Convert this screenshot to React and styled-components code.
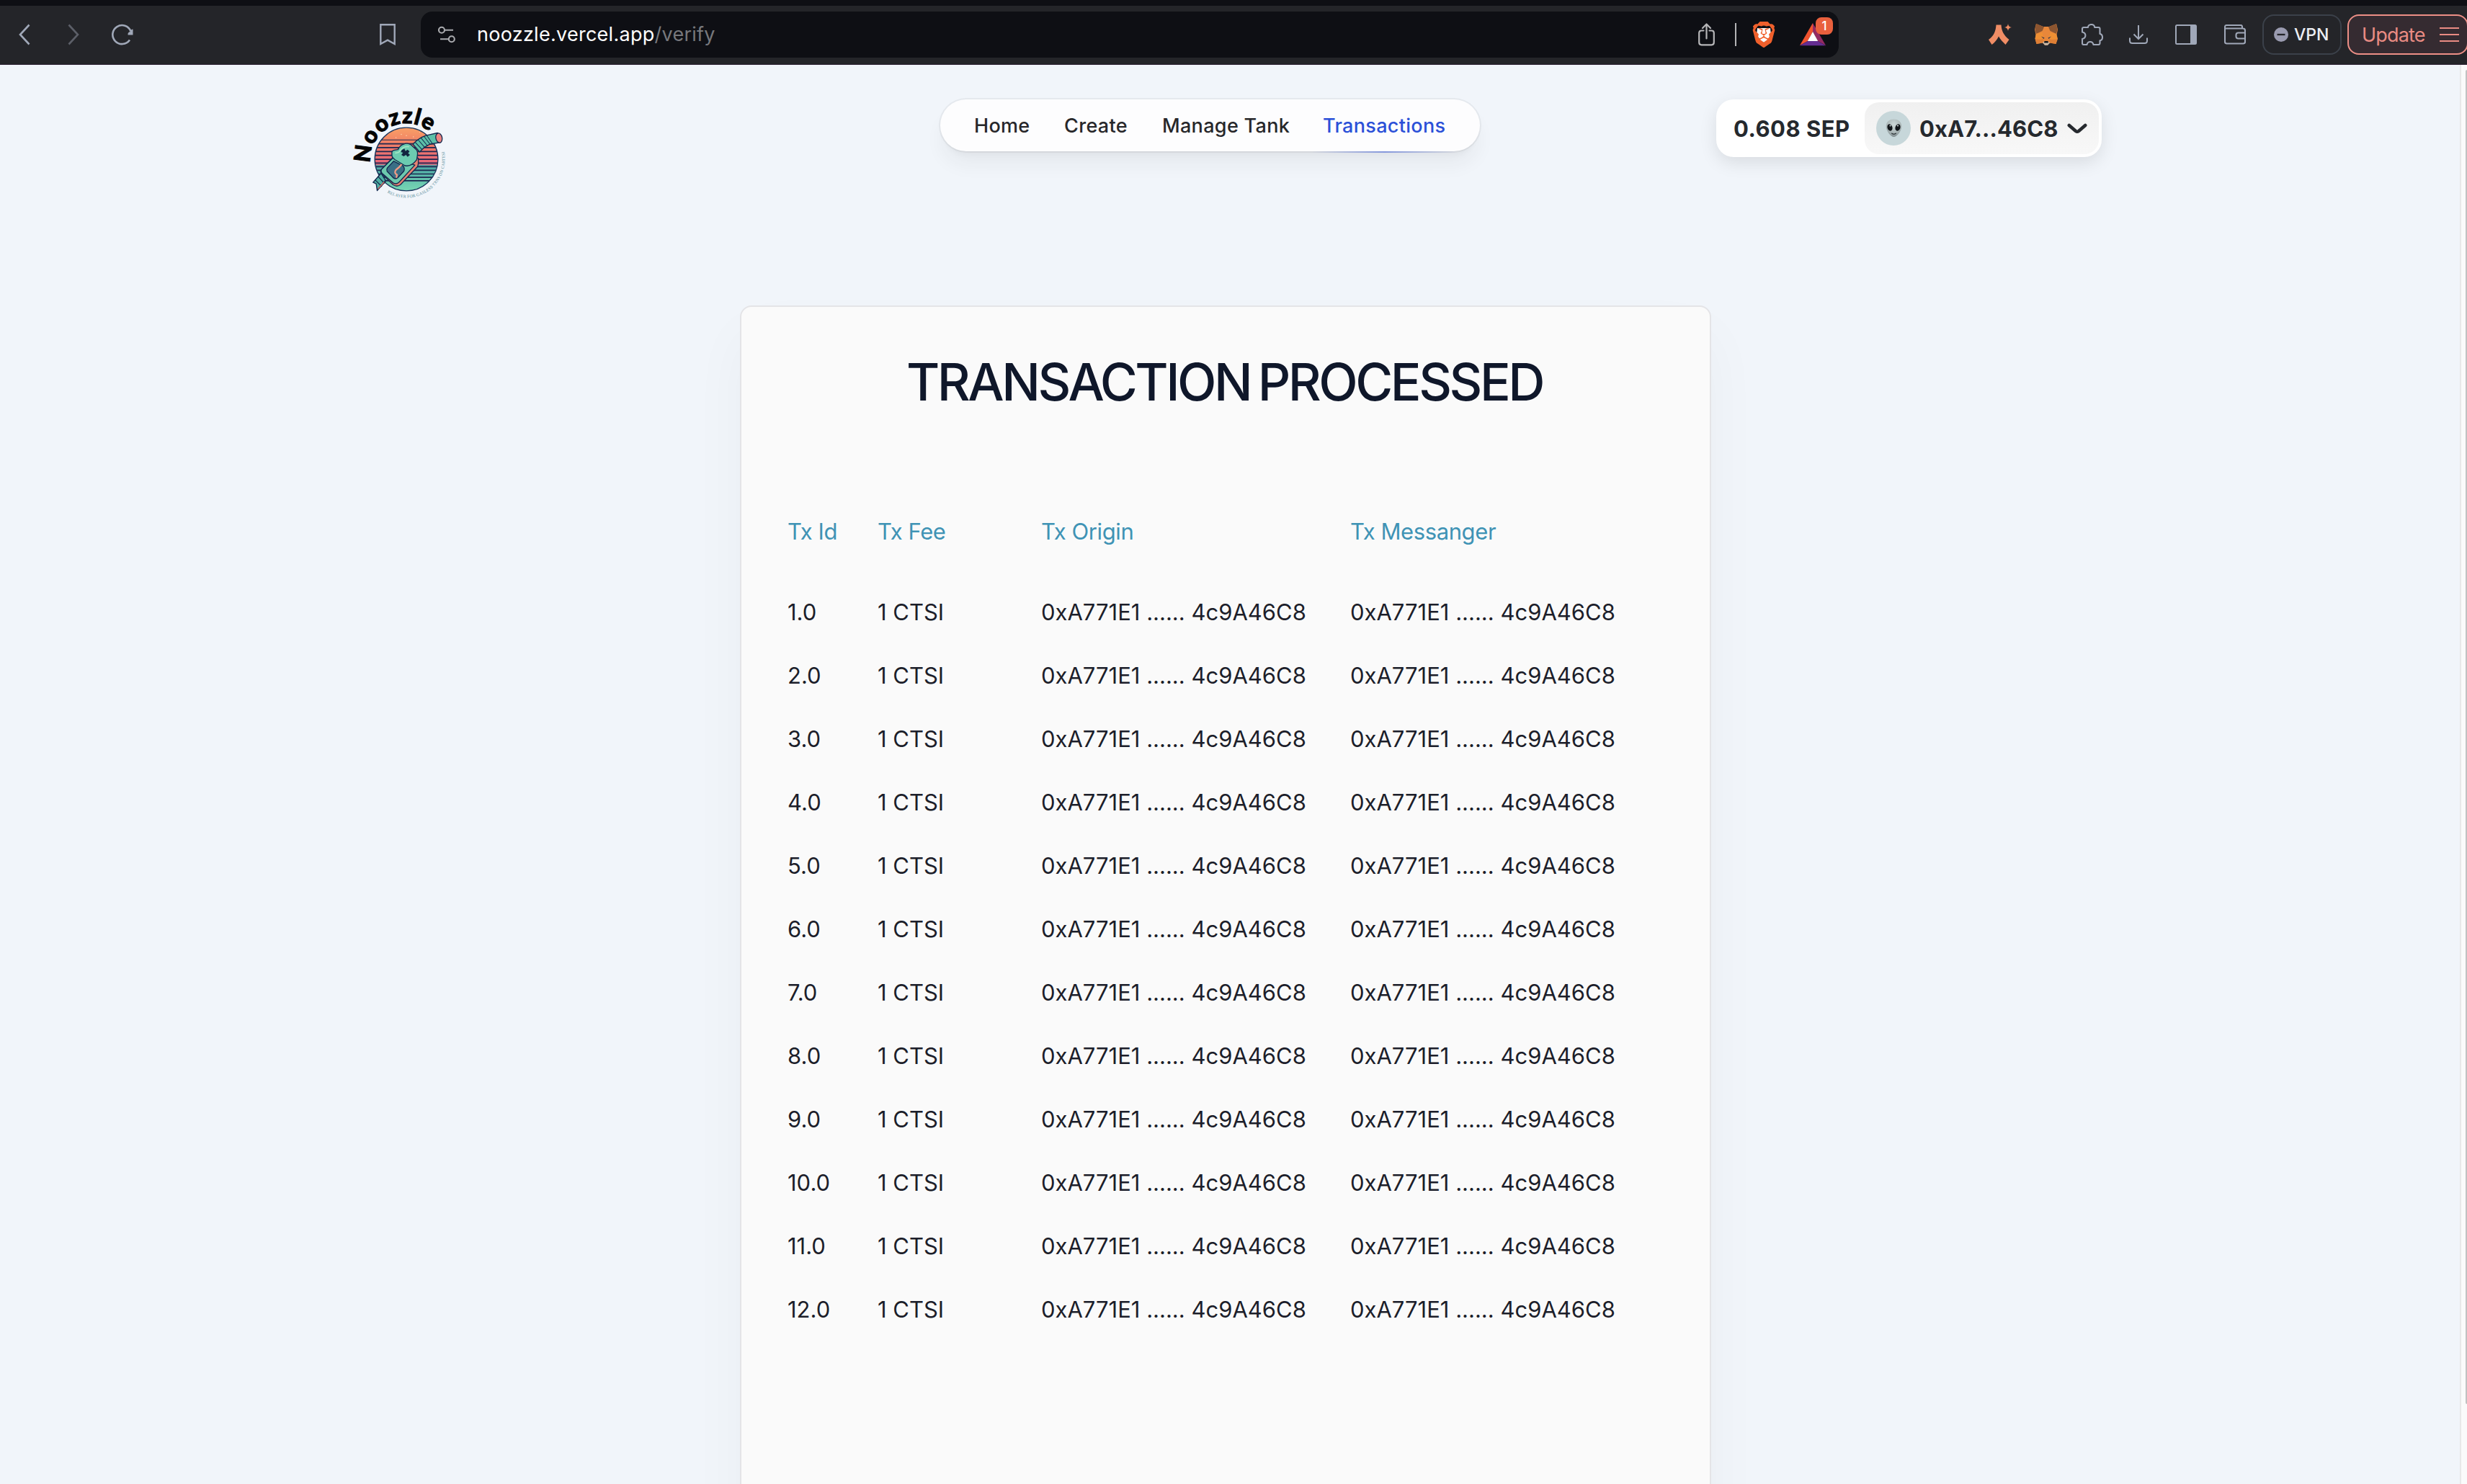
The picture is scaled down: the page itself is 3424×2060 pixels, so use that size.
import React from "react";
import styled, { createGlobalStyle } from "styled-components";
import { SiBrave } from "react-icons/si";

const GlobalStyle = createGlobalStyle`
  * { box-sizing: border-box; }
  html, body { margin: 0; padding: 0; overflow: hidden; }
  body {
    background: #f1f5fa;
    font-family: Inter, "Liberation Sans", sans-serif;
    -webkit-font-smoothing: antialiased;
  }
`;

const Window = styled.div`
  width: 3424px;
  height: 2060px;
  display: flex;
  flex-direction: column;
  overflow: hidden;
`;

/* ---------- browser chrome ---------- */

const Toolbar = styled.div`
  flex: none;
  height: 90px;
  border-top: 8px solid #0e0f14;
  border-bottom: 1px solid #2a1f30;
  padding-bottom: 1px;
  padding-left: 19px;
  background: #242529;
  display: flex;
  align-items: center;
  overflow: hidden;
`;

const NavButtons = styled.div`
  display: flex;
  gap: 38px;
`;

const IconButton = styled.span`
  flex: none;
  width: ${(p) => p.$width || 30}px;
  height: 32px;
  margin-left: ${(p) => p.$space || 0}px;
  display: flex;
  align-items: center;
  justify-content: center;
  color: ${(p) => p.$color || "#a0a8b8"};
`;

const AddressBar = styled.div`
  flex: none;
  width: 1968px;
  height: 64px;
  margin-left: 31px;
  padding: 0 8px 0 24px;
  border-radius: 16px;
  background: #0e0f14;
  display: flex;
  align-items: center;
`;

const Url = styled.span`
  margin-left: 30px;
  font-size: 27px;
  line-height: 64px;
  letter-spacing: 0.01em;
  color: #fff;
  white-space: nowrap;
`;

const UrlPath = styled.span`
  color: #77787c;
`;

const AddressActions = styled.div`
  margin-left: auto;
  display: flex;
  align-items: center;
`;

const Divider = styled.span`
  width: 2px;
  height: 32px;
  margin: 0 20px 0 28px;
  background: #b4b4b6;
`;

const BraveShield = styled.span`
  width: 36px;
  height: 36px;
  display: grid;
  place-items: center;
  & > svg { grid-area: 1 / 1; }
`;

const Rewards = styled.span`
  position: relative;
  width: 46px;
  height: 48px;
  margin-left: 32px;
  padding-top: 8px;
`;

const Badge = styled.span`
  position: absolute;
  top: 0;
  right: 0;
  width: 24px;
  height: 24px;
  border-radius: 8px;
  background: #e9603d;
  color: #fff;
  font-size: 17px;
  font-weight: 500;
  line-height: 24px;
  text-align: center;
`;

const Extensions = styled.div`
  margin-left: 208px;
  display: flex;
  gap: 32px;
`;

const Pill = styled.span`
  flex: none;
  height: 56px;
  width: ${(p) => p.$width}px;
  margin-left: ${(p) => p.$space}px;
  padding-left: ${(p) => p.$inset}px;
  border: 2px solid ${(p) => p.$line};
  border-radius: 16px;
  background: ${(p) => p.$fill};
  color: ${(p) => p.$color};
  display: flex;
  align-items: center;
  gap: ${(p) => p.$gap}px;
  font-size: ${(p) => p.$size}px;
  font-weight: ${(p) => p.$weight};
  letter-spacing: ${(p) => p.$tracking};
`;

/* ---------- page ---------- */

const Viewport = styled.div`
  flex: 1;
  min-height: 0;
  display: flex;
`;

const Page = styled.main`
  flex: 1;
  min-width: 0;
  overflow: hidden;
  background: #f1f5fa;
`;

const ScrollTrack = styled.div`
  width: 10px;
  padding-top: 7px;
  border-left: 2px solid #e8e8e8;
  background: #fafafa;
  display: flex;
  justify-content: flex-end;
`;

const ScrollThumb = styled.div`
  width: 2px;
  height: 1852px;
  border-radius: 2px 0 0 2px;
  background: #c1c1c1;
`;

const Header = styled.header`
  height: 334px;
  padding: 48px 0 0 490px;
  display: grid;
  grid-template-columns: 815px 1077px auto;
  align-items: start;
  justify-content: start;
`;

const LogoLink = styled.a`
  width: 134px;
  height: 134px;
  margin-top: 8px;
  & > svg { overflow: visible; }
`;

const Menu = styled.nav`
  width: 749px;
  height: 72px;
  padding: 0 24px;
  border-radius: 36px;
  background: #fdfdfe;
  box-shadow: 0 0 0 2px rgba(24, 24, 27, 0.05),
    0 20px 30px -6px rgba(39, 39, 42, 0.07),
    0 8px 12px -8px rgba(39, 39, 42, 0.07);
  display: flex;
`;

const MenuLink = styled.a`
  position: relative;
  width: ${(p) => p.$width}px;
  padding-left: 23px;
  font-size: 27px;
  font-weight: 500;
  line-height: 73px;
  letter-spacing: 0.012em;
  white-space: nowrap;
  color: ${(p) => (p.$active ? "#2b50d8" : "#27272a")};
`;

const ActiveLine = styled.span`
  position: absolute;
  left: 8px;
  right: 8px;
  bottom: -2px;
  height: 2px;
  background: linear-gradient(90deg, rgba(80, 110, 220, 0), rgba(80, 110, 220, 0.6), rgba(80, 110, 220, 0));
`;

const Wallet = styled.div`
  width: 535px;
  height: 80px;
  padding: 4px;
  border-radius: 24px;
  background: #fff;
  box-shadow: 0 8px 24px rgba(0, 0, 0, 0.1);
  display: flex;
  color: #25292e;
  font-size: 31px;
  font-weight: 700;
  line-height: 73px;
  white-space: nowrap;
`;

const Balance = styled.span`
  width: 202px;
  padding-left: 20px;
  letter-spacing: 0.016em;
`;

const Account = styled.span`
  flex: 1;
  padding-left: 16px;
  border-radius: 20px;
  background: linear-gradient(#f0f0f0, #f8f8f8);
  display: flex;
  align-items: center;
`;

const Avatar = styled.span`
  width: 48px;
  height: 48px;
  border-radius: 50%;
  background: #c7d7da;
  display: flex;
  align-items: center;
  justify-content: center;
`;

const Address = styled.span`
  width: 205px;
  margin-left: 12px;
  letter-spacing: 0.003em;
`;

const Card = styled.section`
  width: 1348px;
  height: 1800px;
  margin-left: 1027px;
  padding: 64px 62px 64px 64px;
  border: 2px solid #e4e4e7;
  border-radius: 16px;
  background: #fafafa;
  box-shadow: 0 40px 80px rgba(24, 24, 40, 0.035);
`;

const Title = styled.h1`
  margin: 0 0 124px;
  padding-right: 5px;
  font-size: 71px;
  font-weight: 500;
  line-height: 80px;
  letter-spacing: -0.049em;
  word-spacing: -0.07em;
  text-align: center;
  white-space: nowrap;
  color: #0f172a;
`;

const Row = styled.div`
  height: 88px;
  margin-bottom: ${(p) => (p.$head ? 24 : 0)}px;
  display: grid;
  grid-template-columns: 125px 227px 429px 1fr;
  font-size: 31px;
  line-height: 88px;
  letter-spacing: ${(p) => (p.$head ? "-0.013em" : "0")};
  white-space: nowrap;
  color: ${(p) => (p.$head ? "#3f93b5" : "#1c1e2a")};
`;

/* ---------- drawings ---------- */

const Chevron = ({ flip }) => (
  <svg width="16" height="30" viewBox="0 0 16 30" fill="none" stroke="currentColor" strokeWidth="2.6">
    <path d={flip ? "M1.5 1.5L14 15L1.5 28.5" : "M14.5 1.5L2 15L14.5 28.5"} />
  </svg>
);

const Reload = () => (
  <svg width="30" height="30" viewBox="0 0 30 30" fill="none" stroke="currentColor" strokeWidth="2.6">
    <path d="M25 22.5A13 13 0 1 1 26.5 10.5" />
    <path d="M29.5 7.5V15.5H22.5Q22 13 24 11.5Q26.5 11.5 27.5 8Z" fill="currentColor" stroke="none" />
  </svg>
);

const Bookmark = () => (
  <svg width="22" height="30" viewBox="0 0 22 30" fill="none" stroke="currentColor" strokeWidth="2.4">
    <path d="M1.3 1.3H20.7V28L11 22.6L1.3 28Z" />
  </svg>
);

const SiteSettings = () => (
  <svg width="24" height="24" viewBox="0 0 24 24" fill="none" stroke="#a9aaae" strokeWidth="2.1">
    <circle cx="5" cy="5.8" r="4" />
    <path d="M9 5.8H21M3 18.2H14" />
    <circle cx="18.8" cy="18.2" r="4" />
  </svg>
);

const Share = () => (
  <svg width="23" height="32" viewBox="0 0 23 32" fill="none" stroke="#b6b6b8" strokeWidth="2.2" strokeLinecap="round" strokeLinejoin="round">
    <path d="M7.5 10.5H4.5Q1.2 10.5 1.2 13.8V26.8Q1.2 30.3 4.5 30.3H18.5Q21.8 30.3 21.8 26.8V13.8Q21.8 10.5 18.5 10.5H15.5" />
    <path d="M11.5 21.5V1.8M6 7L11.5 1.5L17 7" />
  </svg>
);

const Bat = () => (
  <svg width="36" height="32" viewBox="0 0 36 32">
    <path d="M18 0L0 31L11 25L18 12Z" fill="#f0532f" />
    <path d="M18 0L36 31L25 25L18 12Z" fill="#942b63" />
    <path d="M0 31.3H36L25 25H11Z" fill="#652d91" />
    <path d="M18 12L10.8 25H25.2Z" fill="#fff" />
  </svg>
);

const Lambda = () => (
  <svg width="32" height="30" viewBox="0 0 32 30" fill="#f08d65">
    <path d="M10.5 1.5H17.5C18 10 21 16 28.5 22L23.5 29C20 25.5 16.5 22 14 17.5C11.5 22.5 8.5 26 4.5 29L0 22C7.5 17 10 9.5 10.5 1.5Z" />
    <path d="M27 0Q27.5 4.3 32 5Q27.5 5.7 27 10Q26.5 5.7 22 5Q26.5 4.3 27 0Z" />
  </svg>
);

const Fox = () => (
  <svg width="32" height="30" viewBox="0 0 32 30">
    <path d="M2 0L12 4H20L30 0L32 8L30.5 15L32 21L29.5 28L21 26.5L18 29.5H14L11 26.5L2.5 28L0.5 21L1.5 15L0 8Z" fill="#e8873a" />
    <path d="M2 0L13 4.5L10.5 10L2 14L0.5 8Z" fill="#8c5530" />
    <path d="M30 0L19 4.5L21.5 10L30 14L31.5 8Z" fill="#8c5530" />
    <path d="M2 14L10.5 12L12 19L9 22L0.5 21Z" fill="#ee8f33" />
    <path d="M30 14L21.5 12L20 19L23 22L31.5 21Z" fill="#ee8f33" />
    <path d="M9 22L12 21L11 26.5L2.5 28L1 21.5Z" fill="#de7f35" />
    <path d="M23 22L20 21L21 26.5L29.5 28L31 21.5Z" fill="#de7f35" />
    <path d="M9 17.5L13.5 19.5L12.5 21Z" fill="#33384a" />
    <path d="M23 17.5L18.5 19.5L19.5 21Z" fill="#33384a" />
    <path d="M11 26L13.5 24.5H18.5L21 26.5L18 29.7H14Z" fill="#c9b8a6" />
    <path d="M13.5 24H18.5L19 26.6H13Z" fill="#15161b" />
  </svg>
);

const Puzzle = () => (
  <svg width="30" height="30" viewBox="0 0 30 30" fill="none" stroke="currentColor" strokeWidth="2.1" strokeLinejoin="round">
    <path d="M3 5H9C9 2.6 11 1 13.7 1S18 2.6 18.3 5H23.5Q25.5 5 25.5 7V14C27.6 14.4 29 16.4 29 18.7S27.6 23 25.5 23.3V27Q25.5 29 23.5 29H16.5C16 26.5 14.3 25 12 25S8 26.5 7.5 29H3Q1 29 1 27V21C3.6 20.4 5.4 18.5 5.4 16.2S3.6 12 1 11.5V7Q1 5 3 5Z" />
  </svg>
);

const Download = () => (
  <svg width="26" height="26" viewBox="0 0 26 26" fill="none" stroke="currentColor" strokeWidth="2">
    <path d="M13 0V19M6.5 12.5L13 19L19.5 12.5M1 17.5V21.5Q1 25 4.5 25H21.5Q25 25 25 21.5V17.5" />
  </svg>
);

const SidePanel = () => (
  <svg width="30" height="28" viewBox="0 0 30 28" fill="none" stroke="currentColor" strokeWidth="2">
    <rect x="1" y="1" width="28" height="26" rx="1.5" />
    <path d="M21 1H29V27H21Z" fill="currentColor" stroke="none" />
  </svg>
);

const WalletIcon = () => (
  <svg width="30" height="28" viewBox="0 0 30 28" fill="none" stroke="currentColor" strokeWidth="2.1" strokeLinejoin="round">
    <path d="M25 5.5V3.5Q25 1 22.5 1H3.5Q1 1 1 3.5V24Q1 26.5 3.5 26.5H26.5Q29 26.5 29 24V8.5Q29 5.5 26 5.5H1" />
    <path d="M29 11.5H19.5Q16.5 11.5 16.5 14.5V16.5Q16.5 19.5 19.5 19.5H29" />
  </svg>
);

const VpnDot = () => (
  <svg width="20" height="20" viewBox="0 0 20 20">
    <circle cx="10" cy="10" r="10" fill="#9a9bb0" />
    <path d="M4.5 10H15.5" stroke="#242529" strokeWidth="2.3" />
  </svg>
);

const Burger = () => (
  <svg width="27" height="22" viewBox="0 0 27 22" stroke="currentColor" strokeWidth="2.2">
    <path d="M0 2H27M0 11H27M0 20H27" />
  </svg>
);

const Alien = () => (
  <svg width="23" height="26" viewBox="0 0 23 26">
    <defs>
      <radialGradient id="skin" cx="0.5" cy="0.3" r="0.75">
        <stop offset="0" stopColor="#cdd8d8" />
        <stop offset="0.65" stopColor="#a7b3b4" />
        <stop offset="1" stopColor="#747f82" />
      </radialGradient>
    </defs>
    <path d="M11.5 0.5C18.5 0.5 22.5 5 22.2 11C21.8 17.5 15.5 25 11.5 25S1.2 17.5 0.8 11C0.5 5 4.5 0.5 11.5 0.5Z" fill="url(#skin)" />
    <ellipse cx="6" cy="12" rx="3.4" ry="4.8" transform="rotate(-20 6 12)" fill="#111519" />
    <ellipse cx="17" cy="12" rx="3.4" ry="4.8" transform="rotate(20 17 12)" fill="#111519" />
    <circle cx="6.5" cy="9.5" r="1" fill="#dfe7e8" />
    <circle cx="17" cy="9.5" r="1" fill="#dfe7e8" />
    <path d="M8.8 20.2Q11.5 22.2 14.2 20.2" stroke="#20262a" strokeWidth="1.3" fill="none" strokeLinecap="round" />
  </svg>
);

const Caret = () => (
  <svg width="28" height="15" viewBox="0 0 28 15" fill="none" stroke="currentColor" strokeWidth="4.6" strokeLinecap="round" strokeLinejoin="round">
    <path d="M2.8 3L12 11Q14 12.5 16 11L25.2 3" />
  </svg>
);

const stripes = [222, 238, 254, 270, 286, 302, 318, 333, 348, 363, 377, 391];

const Logo = () => (
  <svg width="134" height="134" viewBox="90 78 400 400">
    <defs>
      <linearGradient id="sun" x1="0" y1="0" x2="0" y2="1">
        <stop offset="0" stopColor="#f9a066" />
        <stop offset="0.25" stopColor="#f07f66" />
        <stop offset="0.58" stopColor="#e8657c" />
        <stop offset="0.6" stopColor="#4ba7a5" />
        <stop offset="1" stopColor="#78d8b4" />
      </linearGradient>
      <clipPath id="disc">
        <circle cx="311" cy="302" r="130" />
      </clipPath>
      <path id="name-arc" d="M163 318A149 149 0 0 1 311 153A149 149 0 0 1 460 302" />
      <path id="tag-arc" d="M232 441A160 160 0 0 0 471 302A160 160 0 0 0 465 258" />
    </defs>
    <circle cx="311" cy="302" r="131" fill="url(#sun)" stroke="#17345c" strokeWidth="4" />
    <g clipPath="url(#disc)" stroke="#1c2850">
      {stripes.map((y, i) => (
        <path key={y} d={`M175 ${y}H450`} strokeWidth={i === 0 ? 3 : 5} />
      ))}
    </g>
    <g fill="#ffe0b8">
      <circle cx="268" cy="212" r="1.8" />
      <circle cx="290" cy="199" r="2" />
      <circle cx="311" cy="204" r="2" />
      <circle cx="340" cy="209" r="2" />
      <circle cx="366" cy="190" r="1.5" />
    </g>
    <g stroke="#14284e" strokeWidth="4" strokeLinejoin="round" strokeLinecap="round">
      <path d="M206 360L173 398L186 404L190 432L226 392Z" fill="#4fb0a4" />
      <path d="M182 388L208 414M194 374L219 401M192 426L222 392" strokeWidth="4" fill="none" />
      <path d="M194 424L218 397" stroke="#e9786a" strokeWidth="4" />
      <path d="M254 296L206 346Q202 352 207 360L256 408Q272 418 286 408L356 334Q362 326 360 298L340 290Z" fill="#e58272" />
      <path d="M256 296L208 344Q204 352 210 360L256 400Q270 408 282 396L346 326Z" fill="#6cc9ae" />
      <path d="M258 310L232 338Q228 344 231 352L258 380Q268 386 276 378L300 352Q306 342 298 330Z" fill="#3a6f86" />
      <path d="M292 322Q282 336 268 346Q258 358 272 366L270 376" fill="none" stroke="#ef9b85" strokeWidth="7" />
      <path d="M338 240Q362 214 392 204L440 193L452 232L408 240Q386 248 366 272Z" fill="#5cc0a8" />
      <path d="M348 232L376 262M360 222L387 253M372 214L398 246M384 207L409 240M396 204L418 236" fill="none" strokeWidth="3" />
      <ellipse cx="446" cy="214" rx="13" ry="20" transform="rotate(-12 446 214)" fill="#ee8480" />
      <path d="M251 272Q252 266 262 264L276 262Q284 244 298 240Q316 232 330 242L352 262Q360 272 356 290L354 304Q330 336 304 328L264 304Q250 294 251 284Z" fill="#6ccbb0" />
      <path d="M266 276Q282 276 288 262Q300 248 320 250" fill="none" stroke="#a4e6c6" strokeWidth="5" />
    </g>
    <path d="M292 264L303 258L307 268L316 262L324 270L318 277L326 284L316 292L309 284L300 290L290 284L297 275L288 272Z" fill="#122540" />
    <text fontFamily="Lato, sans-serif" fontWeight="900" fontSize="93" fill="#050505" stroke="#050505" strokeWidth="3">
      <textPath href="#name-arc" textLength="354" lengthAdjust="spacing">Noozzle</textPath>
    </text>
    <text fontFamily="Liberation Serif, serif" fontSize="17" fill="#4f8593">
      <textPath href="#tag-arc" textLength="366" lengthAdjust="spacing">RELAYER FOR GASLESS TXNS ON CARTESI</textPath>
    </text>
  </svg>
);

const rows = Array.from({ length: 12 }, (_, i) => ({
  id: `${i + 1}.0`,
  fee: "1 CTSI",
  origin: "0xA771E1 ...... 4c9A46C8",
  messenger: "0xA771E1 ...... 4c9A46C8",
}));

const links = [
  { label: "Home", width: 125 },
  { label: "Create", width: 136 },
  { label: "Manage Tank", width: 223 },
  { label: "Transactions", width: 217, active: true },
];

export default function App() {
  return (
    <Window>
      <GlobalStyle />
      <Toolbar>
        <NavButtons>
          <IconButton><Chevron /></IconButton>
          <IconButton $color="#5c5f68"><Chevron flip /></IconButton>
          <IconButton><Reload /></IconButton>
        </NavButtons>
        <IconButton $space={338}><Bookmark /></IconButton>
        <AddressBar>
          <SiteSettings />
          <Url>noozzle.vercel.app<UrlPath>/verify</UrlPath></Url>
          <AddressActions>
            <Share />
            <Divider />
            <BraveShield>
              <svg width="26" height="28" viewBox="0 0 26 28">
                <path d="M4 5H22L23 14L18 22L13 25L8 22L3 14Z" fill="#fff" />
              </svg>
              <SiBrave size={36} color="#f0602c" />
            </BraveShield>
            <Rewards>
              <Bat />
              <Badge>1</Badge>
            </Rewards>
          </AddressActions>
        </AddressBar>
        <Extensions>
          <IconButton $width={32}><Lambda /></IconButton>
          <IconButton $width={32}><Fox /></IconButton>
          <IconButton $width={32}><Puzzle /></IconButton>
          <IconButton $width={32}><Download /></IconButton>
          <IconButton $width={32} $space={2}><SidePanel /></IconButton>
          <IconButton $width={32} $space={4}><WalletIcon /></IconButton>
        </Extensions>
        <Pill $width={110} $space={22} $inset={14} $gap={8} $line="#3b414a" $fill="#242529" $color="#eceef4" $size={23} $weight={500} $tracking="0">
          <VpnDot />
          VPN
        </Pill>
        <Pill $width={168} $space={8} $inset={18} $gap={20} $line="#ec8f86" $fill="#352b31" $color="#e98b83" $size={27} $weight={400} $tracking="-0.03em">
          Update
          <Burger />
        </Pill>
      </Toolbar>
      <Viewport>
        <Page>
          <Header>
            <LogoLink><Logo /></LogoLink>
            <Menu>
              {links.map((l) => (
                <MenuLink key={l.label} $width={l.width} $active={l.active}>
                  {l.label}
                  {l.active && <ActiveLine />}
                </MenuLink>
              ))}
            </Menu>
            <Wallet>
              <Balance>0.608 SEP</Balance>
              <Account>
                <Avatar><Alien /></Avatar>
                <Address>0xA7...46C8</Address>
                <Caret />
              </Account>
            </Wallet>
          </Header>
          <Card>
            <Title>TRANSACTION PROCESSED</Title>
            <Row $head>
              <span>Tx Id</span>
              <span>Tx Fee</span>
              <span>Tx Origin</span>
              <span>Tx Messanger</span>
            </Row>
            {rows.map((r) => (
              <Row key={r.id}>
                <span>{r.id}</span>
                <span>{r.fee}</span>
                <span>{r.origin}</span>
                <span>{r.messenger}</span>
              </Row>
            ))}
          </Card>
        </Page>
        <ScrollTrack><ScrollThumb /></ScrollTrack>
      </Viewport>
    </Window>
  );
}
